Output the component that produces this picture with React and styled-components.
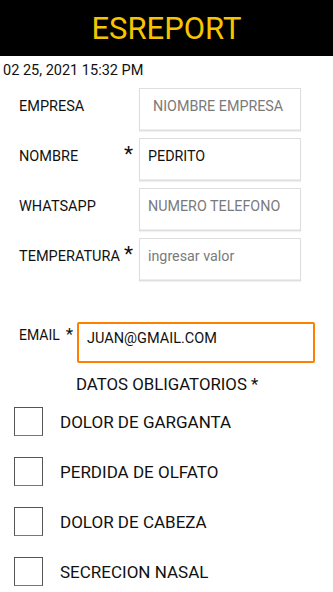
import React from "react";
import styled, { createGlobalStyle } from "styled-components";

const GlobalStyle = createGlobalStyle`
  body {
    margin: 0;
    background: #fff;
    font-family: Roboto, "Liberation Sans", sans-serif;
    color: #111;
  }
`;

const Screen = styled.div`
  width: 333px;
  height: 592px;
  overflow: hidden;
  background: #fff;
`;

const Header = styled.header`
  height: 56px;
  background: #000;
  display: flex;
  align-items: center;
  justify-content: center;
`;

const Title = styled.h1`
  margin: 0;
  color: #f7c500;
  font-size: 31px;
  font-weight: 400;
`;

const DateLine = styled.div`
  padding: 7px 0 0 3px;
  font-size: 14.5px;
  line-height: 16px;
`;

const Fields = styled.div`
  display: flex;
  flex-direction: column;
  gap: 7px;
  padding: 9px 0 0 19px;
`;

const Row = styled.div`
  display: flex;
  align-items: center;
  height: 43px;
`;

const Label = styled.div`
  width: 120px;
  font-size: 14.5px;
  display: flex;
  align-items: center;
  justify-content: space-between;
  padding-right: 6px;
  margin-top: -6px;
  box-sizing: border-box;
`;

const Star = styled.span`
  font-size: ${({ $small }) => ($small ? 17 : 21)}px;
  line-height: 1;
  margin-top: ${({ $small }) => ($small ? 0 : -4)}px;
`;

const Box = styled.div`
  width: 162px;
  height: 43px;
  box-sizing: border-box;
  border: 1px solid #dedede;
  box-shadow: inset 0 -1px 0 #eee, 0 1px 1px rgba(0, 0, 0, 0.05);
  padding: 9px 8px 0 ${({ $pad }) => $pad || 8}px;
  font-size: 14.3px;
  color: ${({ $placeholder }) => ($placeholder ? "#7a7a7a" : "#111")};
`;

const EmailRow = styled.div`
  display: flex;
  align-items: flex-start;
  padding: 41px 0 0 19px;
`;

const EmailLabel = styled.div`
  width: 58px;
  font-size: 14px;
  padding-top: 4px;
  display: flex;
  gap: 6px;
  align-items: center;
`;

const EmailBox = styled.div`
  width: 238px;
  height: 41px;
  box-sizing: border-box;
  border: 2px solid #ff7f00;
  border-radius: 2px;
  padding: 6px 8px 0 8px;
  font-size: 14.5px;
`;

const Required = styled.div`
  padding: 10px 0 0 76px;
  font-size: 16.8px;
  line-height: 22px;
`;

const Checks = styled.div`
  display: flex;
  flex-direction: column;
  gap: 21px;
  padding: 12px 0 0 14px;
`;

const CheckRow = styled.label`
  display: flex;
  align-items: center;
  gap: 17px;
  height: 29px;
  font-size: 17px;
`;

const Square = styled.span`
  width: 29px;
  height: 29px;
  box-sizing: border-box;
  border: 1.5px solid #555;
  border-bottom-color: #777;
`;

const fields = [
  { label: "EMPRESA", value: "NIOMBRE EMPRESA", placeholder: true, pad: 13 },
  { label: "NOMBRE", star: true, value: "PEDRITO" },
  { label: "WHATSAPP", value: "NUMERO TELEFONO", placeholder: true },
  { label: "TEMPERATURA", star: true, value: "ingresar valor", placeholder: true },
];

const symptoms = ["DOLOR DE GARGANTA", "PERDIDA DE OLFATO", "DOLOR DE CABEZA", "SECRECION NASAL"];

export default function App() {
  return (
    <Screen>
      <GlobalStyle />
      <Header>
        <Title>ESREPORT</Title>
      </Header>
      <DateLine>02 25, 2021 15:32 PM</DateLine>
      <Fields>
        {fields.map((f) => (
          <Row key={f.label}>
            <Label>
              <span>{f.label}</span>
              {f.star && <Star>*</Star>}
            </Label>
            <Box $placeholder={f.placeholder} $pad={f.pad}>
              {f.value}
            </Box>
          </Row>
        ))}
      </Fields>
      <EmailRow>
        <EmailLabel>
          <span>EMAIL</span>
          <Star $small>*</Star>
        </EmailLabel>
        <EmailBox>JUAN@GMAIL.COM</EmailBox>
      </EmailRow>
      <Required>DATOS OBLIGATORIOS *</Required>
      <Checks>
        {symptoms.map((s) => (
          <CheckRow key={s}>
            <Square />
            {s}
          </CheckRow>
        ))}
      </Checks>
    </Screen>
  );
}
